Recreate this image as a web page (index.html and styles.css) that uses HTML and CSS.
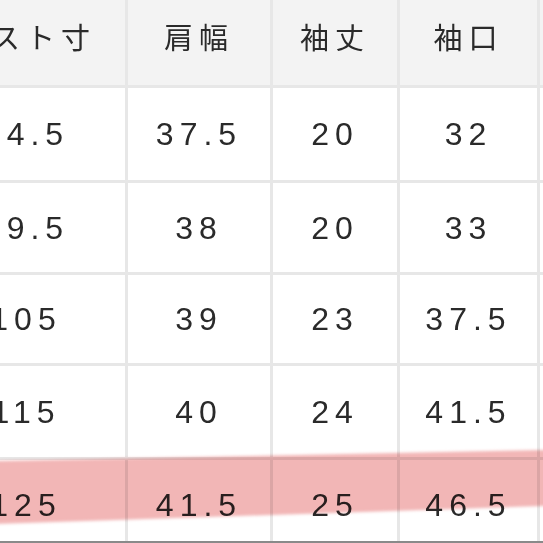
FILE: index.html
```html
<!DOCTYPE html>
<html lang="ja">
<head>
<meta charset="utf-8">
<link rel="stylesheet" href="styles.css">
</head>
<body>
<div class="sheet">
  <table class="size-table">
    <colgroup>
      <col class="c0"><col class="c1"><col class="c2"><col class="c3"><col class="c4">
    </colgroup>
    <thead>
      <tr class="head"><th>バスト寸</th><th>肩幅</th><th>袖丈</th><th>袖口</th><th>着丈</th></tr>
    </thead>
    <tbody>
      <tr class="r1"><td>84.5</td><td>37.5</td><td>20</td><td>32</td><td>60</td></tr>
      <tr class="r2"><td>89.5</td><td>38</td><td>20</td><td>33</td><td>61</td></tr>
      <tr class="r3"><td>105</td><td>39</td><td>23</td><td>37.5</td><td>62</td></tr>
      <tr class="r4"><td>115</td><td>40</td><td>24</td><td>41.5</td><td>63</td></tr>
      <tr class="r5"><td>125</td><td>41.5</td><td>25</td><td>46.5</td><td>64</td></tr>
    </tbody>
  </table>
  <svg class="marker" width="543" height="543" viewBox="0 0 543 543">
    <defs><filter id="soft"><feGaussianBlur stdDeviation="1.6"/></filter></defs>
    <polygon points="-5,461 543,450 548,451 548,506 543,506 -5,524" fill="#f2b6b6" filter="url(#soft)"/>
  </svg>
  <div class="bottom-line"></div>
</div>
</body>
</html>
```
FILE: styles.css
```css
html, body {
  margin: 0;
  padding: 0;
  background: #ffffff;
}
body {
  width: 543px;
  height: 543px;
  overflow: hidden;
}
.sheet {
  position: relative;
  width: 543px;
  height: 543px;
  overflow: hidden;
}
.size-table {
  margin-left: -76px;
  margin-top: -3px;
  border-collapse: collapse;
  table-layout: fixed;
  width: 752px;
  color: #2a2a2a;
}
.c0 { width: 201px; }
.c1 { width: 145px; }
.c2 { width: 127px; }
.c3 { width: 140px; }
.c4 { width: 139px; }
.size-table th,
.size-table td {
  border: 3px solid #e7e7e7;
  text-align: center;
  vertical-align: middle;
  padding: 0;
  letter-spacing: 6px;
}
.size-table th {
  background: #f3f3f3;
  font-family: "Noto Sans CJK JP", "Noto Sans", sans-serif;
  font-weight: 400;
  font-size: 29px;
  height: 73px;
  line-height: 1;
  padding-bottom: 12px;
}
.size-table td {
  background: #ffffff;
  font-family: "Liberation Sans", Arial, sans-serif;
  font-size: 32px;
  line-height: 1;
}
.r1 td { height: 92px; }
.r2 td { height: 89px; }
.r3 td { height: 88px; }
.r4 td { height: 91px; }
.r5 td { height: 90px; }
.marker {
  position: absolute;
  left: 0;
  top: 0;
  pointer-events: none;
  mix-blend-mode: multiply;
}
.bottom-line {
  position: absolute;
  left: 0;
  right: 0;
  bottom: 0;
  height: 2px;
  background: #8a8a8a;
}
```
